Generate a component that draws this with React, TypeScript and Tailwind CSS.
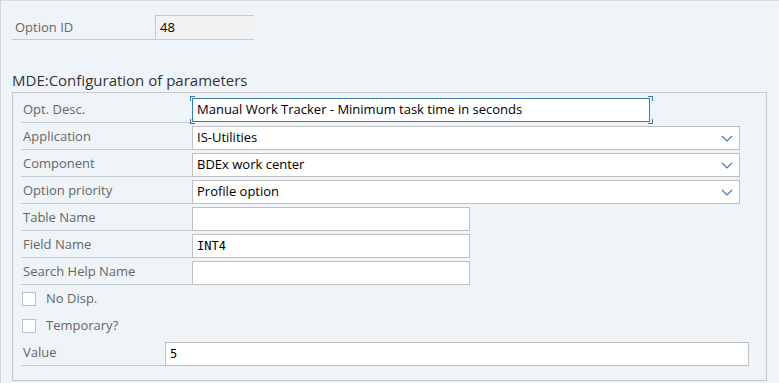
import React from "react";

const font = { fontFamily: '"Open Sans", "Liberation Sans", Arial, sans-serif' };

function Chevron() {
  return (
    <svg width="12" height="7" viewBox="0 0 12 7" className="mr-[6px]">
      <path d="M1 1 L6 6 L11 1" fill="none" stroke="#427cac" strokeWidth="1.2" />
    </svg>
  );
}

function Label({ text, w = "w-[171px]" }: { text: string; w?: string }) {
  return (
    <div className={`${w} h-full flex items-center border-b border-[#c6cbd0] pl-[2px] pt-[1px] text-[13px] text-[#666666] shrink-0`}>
      {text}
    </div>
  );
}

function Row({ children }: { children: React.ReactNode }) {
  return <div className="flex h-[27px] items-end">{children}</div>;
}

function TextBox({ value = "", w, mono = false, select = false }: { value?: string; w: string; mono?: boolean; select?: boolean }) {
  return (
    <div className={`${w} h-[24px] bg-white border border-[#bfbfbf] flex items-center justify-between pl-[4px] text-[13px] text-black`}>
      <span style={mono ? { fontFamily: '"DejaVu Sans Mono", monospace', fontSize: 12 } : undefined}>{value}</span>
      {select && <Chevron />}
    </div>
  );
}

export default function App() {
  return (
    <div className="w-[779px] h-[383px] bg-[#eff4f9] border-t border-t-[#d3dfeb] border-l border-l-[#d0d5da] overflow-hidden" style={font}>
      <div className="pl-[11px] pt-[14px]">
        <div className="flex h-[25px] w-[242px] border-b border-[#c6cbd0]">
          <div className="w-[143px] flex items-center pl-[3px] pt-[1px] text-[13px] text-[#666666]">Option ID</div>
          <div className="flex-1 bg-[#f2f2f2] border-l border-t border-[#c9c9c9] flex items-center pl-[4px] text-[13px] text-black">48</div>
        </div>
        <div className="mt-[30px] text-[15px] text-[#32363a] leading-[20px]">MDE:Configuration of parameters</div>
        <div className="mt-[2px] w-[755px] h-[289px] border border-[#c8c8c8] pl-[8px] pt-[3px]">
          <Row>
            <Label text="Opt. Desc." />
            <div className="relative h-[24px] w-[458px] bg-white border border-[#3f7aab] flex items-center pl-[4px] text-[13px] text-black mb-[1px]">
              Manual Work Tracker - Minimum task time in seconds
              <div className="absolute -left-[3px] -top-[3px] w-[5px] h-[5px] border-l border-t border-[#3f7aab]" />
              <div className="absolute -left-[3px] -bottom-[3px] w-[5px] h-[5px] border-l border-b border-[#3f7aab]" />
              <div className="absolute -right-[4px] -top-[3px] w-[5px] h-[5px] border-r border-t border-[#3f7aab]" />
              <div className="absolute -right-[4px] -bottom-[3px] w-[5px] h-[5px] border-r border-b border-[#3f7aab]" />
            </div>
          </Row>
          <Row>
            <Label text="Application" />
            <TextBox value="IS-Utilities" w="w-[548px]" select />
          </Row>
          <Row>
            <Label text="Component" />
            <TextBox value="BDEx work center" w="w-[548px]" select />
          </Row>
          <Row>
            <Label text="Option priority" />
            <TextBox value="Profile option" w="w-[548px]" select />
          </Row>
          <Row>
            <Label text="Table Name" />
            <TextBox w="w-[278px]" />
          </Row>
          <Row>
            <Label text="Field Name" />
            <TextBox value="INT4" w="w-[278px]" mono />
          </Row>
          <Row>
            <Label text="Search Help Name" />
            <TextBox w="w-[278px]" />
          </Row>
          <div className="flex h-[27px] items-center pl-[1px]">
            <div className="w-[14px] h-[14px] bg-white border border-[#c0c0c0]" />
            <span className="ml-[10px] text-[13px] text-[#666666]">No Disp.</span>
          </div>
          <div className="flex h-[27px] items-center pl-[1px]">
            <div className="w-[14px] h-[14px] bg-white border border-[#c0c0c0]" />
            <span className="ml-[10px] text-[13px] text-[#666666]">Temporary?</span>
          </div>
          <Row>
            <Label text="Value" w="w-[144px]" />
            <TextBox value="5" w="w-[584px]" mono />
          </Row>
        </div>
      </div>
    </div>
  );
}
